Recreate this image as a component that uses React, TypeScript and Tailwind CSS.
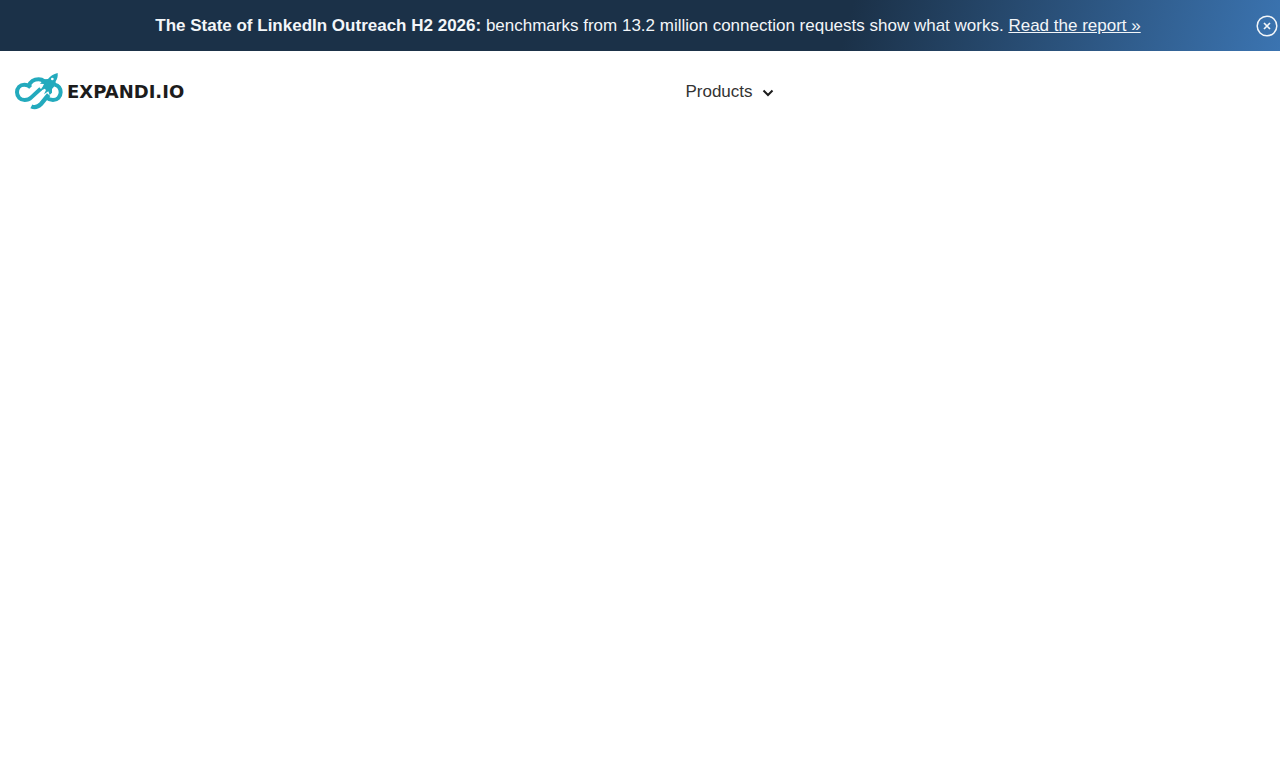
import React, { useState } from "react";

const Logo: React.FC = () => (
  <a href="#" aria-label="Expandi.io" className="flex items-center gap-1">
    <svg viewBox="18 19 147 111" className="h-[37px] w-[49px]" fill="none" aria-hidden="true">
      <g stroke="#23aabd" strokeWidth="12">
        <path d="M68 62 C63 57 57 54 49 54 C36 54 27 64 27 77 C27 90 37 100 50 100 C59 100 64 98 70 92 L98 66" />
        <path d="M62 58 C68 43 79 38 92 38 C99 38 104 40 109 44" />
        <path d="M140 54 C152 57 158 66 158 77 C158 90 148 100 135 100 C127 100 121 98 114 92" />
        <path d="M70 119 C82 125 91 120 99 112 L122 84" strokeWidth="13" />
      </g>
      <path
        d="M149 19 C136 22 127 28 120 37 L109 38 L96 51 L108 52 L104 60 L93 75 L110 66 L114 70 L108 83 L121 74 L125 85 L132 78 L132 67 L143 54 L143 44 C148 37 150 29 149 19 Z"
        fill="#23aabd"
      />
      <circle cx="133" cy="37" r="4" fill="#fff" />
    </svg>
    <span className="font-['DejaVu_Sans',sans-serif] text-[18px] leading-6 font-bold text-[#1c1c1c]">
      EXPANDI.IO
    </span>
  </a>
);

const App: React.FC = () => {
  const [showBanner, setShowBanner] = useState(true);

  return (
    <div className="min-h-screen bg-white font-['Liberation_Sans',Arial,sans-serif] text-[17px]">
      {/* Announcement bar */}
      {showBanner && (
        <div className="flex items-center bg-[linear-gradient(105deg,#1b3148_66%,#3b74b1_100%)] py-3 pr-[2px] pl-10 text-[#f3f6f9]">
          <p className="flex-1 text-center leading-[27px]">
            <strong>The State of LinkedIn Outreach H2 2026:</strong> benchmarks from 13.2 million
            connection requests show what works.{" "}
            <a href="#" className="underline">
              Read the report »
            </a>
          </p>
          <button type="button" aria-label="Close" onClick={() => setShowBanner(false)}>
            <svg viewBox="0 0 22 22" className="size-[22px]" fill="none" stroke="currentColor" aria-hidden="true">
              <circle cx="11" cy="11" r="9.8" strokeWidth="1.5" />
              <path d="M8 8 L14 14 M14 8 L8 14" strokeWidth="1.7" />
            </svg>
          </button>
        </div>
      )}

      {/* Header */}
      <header className="grid grid-cols-[1fr_auto_1fr] items-center px-[14px] py-[22px]">
        <Logo />
        <nav className="pl-[180px]">
          <button type="button" className="flex items-center gap-2 text-[#333]">
            Products
            <svg viewBox="0 0 14 14" className="size-[14px]" fill="none" stroke="#1c1c1c" strokeWidth="2" aria-hidden="true">
              <path d="M2.5 5.5 L7 10 L11.5 5.5" />
            </svg>
          </button>
        </nav>
      </header>
    </div>
  );
};

export default App;
